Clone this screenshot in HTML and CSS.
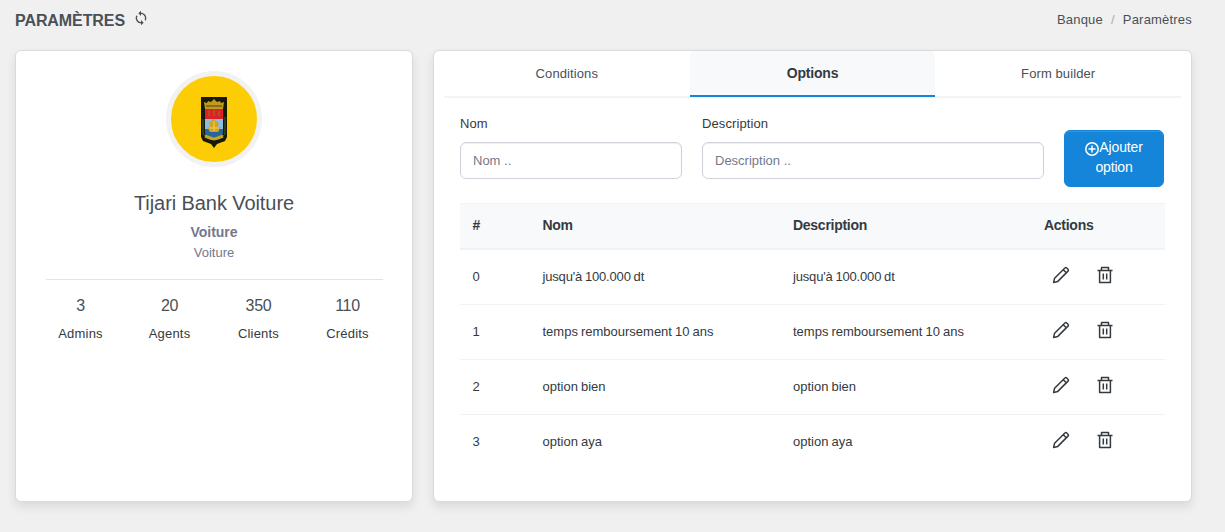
FILE: index.html
```html
<!DOCTYPE html>
<html lang="fr">
<head>
<meta charset="utf-8">
<title>Paramètres</title>
<link rel="stylesheet" href="styles.css">
</head>
<body>
<svg class="sprite" aria-hidden="true">
  <symbol id="pencil" viewBox="0 0 18 18"><path d="M1.6 16.4l1-4.2L12.9 2a1.3 1.3 0 0 1 1.9 0l1.2 1.2a1.3 1.3 0 0 1 0 1.9L5.8 15.4zM11.2 3.7l3.1 3.1" /></symbol>
  <symbol id="trash" viewBox="0 0 18 18"><path d="M1.5 4.5h15M5.5 4V1.5h7V4M3.6 5v11.6h10.8V5M7.3 7.5v6M10.7 7.5v6" /></symbol>
</svg>
<header class="topbar">
  <h1 class="title">PARAMÈTRES</h1>
  <svg class="sync" viewBox="0 0 24 24"><path d="M12 4V1L8 5l4 4V6c3.31 0 6 2.69 6 6 0 1.01-.25 1.97-.7 2.8l1.46 1.46C19.54 15.03 20 13.57 20 12c0-4.42-3.58-8-8-8zm0 14c-3.31 0-6-2.69-6-6 0-1.01.25-1.97.7-2.8L5.24 7.74C4.46 8.97 4 10.43 4 12c0 4.42 3.58 8 8 8v3l4-4-4-4v3z"/></svg>
  <nav class="breadcrumb"><span>Banque</span><span class="sep">/</span><span>Paramètres</span></nav>
</header>
<main class="content">
  <section class="card profile">
    <div class="avatar">
      <svg class="crest" viewBox="0 0 28 54">
        <path fill="#171908" d="M1 2h26v40l-2 4-8 3-3 4-3-4-8-3-2-4z"/>
        <path fill="#c39a20" d="M4 7l3 1 1-2 3 1 3-3 3 3 3-1 1 2 3-1-1 7H5z"/>
        <path stroke="#4d4010" d="M6 11h16" />
        <path fill="#dc2027" d="M5 14h18v10H5z"/>
        <path stroke="#a76218" stroke-width="1.5" d="M9 16v5M14 15v6M19 16v5"/>
        <path fill="#8dbde0" d="M5 24h18v10H5z"/>
        <path fill="#27669a" d="M5 34h18v5l-4 3H9l-4-3z"/>
        <path fill="#d1a323" d="M9 28l4-4 3 2 3 2-1 4h3l-3 5h-8l-3-5h3z"/>
        <path stroke="#efd25b" d="M9 33h10M14 26v10"/>
        <path stroke="#426026" fill="none" d="M3 24v15l4 4M25 22v17l-4 4"/>
        <path stroke="#c9a51e" stroke-width="3" fill="none" d="M5 41l5 2 4 1 4-1 5-2"/>
      </svg>
    </div>
    <h2 class="name"><span>Tijari Bank Voiture</span></h2>
    <strong class="kind">Voiture</strong>
    <span class="detail">Voiture</span>
    <div class="stats">
      <div><b>3</b><span>Admins</span></div>
      <div><b>20</b><span>Agents</span></div>
      <div><b>350</b><span>Clients</span></div>
      <div><b>110</b><span>Crédits</span></div>
    </div>
  </section>
  <section class="card settings">
    <div class="tabs"><a class="tab">Conditions</a><a class="tab active">Options</a><a class="tab">Form builder</a></div>
    <form class="form">
      <label class="field short">Nom<input class="input" placeholder="Nom .."></label>
      <label class="field long">Description<input class="input" placeholder="Description .."></label>
      <button class="add" type="button"><span class="line"><svg class="plus" viewBox="0 0 14 14"><path d="M7 3.5v7M3.5 7h7"/><circle cx="7" cy="7" r="6.2"/></svg>Ajouter</span><span class="line">option</span></button>
    </form>
    <div class="table">
      <div class="row head"><span>#</span><span>Nom</span><span>Description</span><span>Actions</span></div>
      <div class="row"><span>0</span><span class="amount">jusqu'à 100.000 dt</span><span class="amount">jusqu'à 100.000 dt</span><span class="actions"><svg><use href="#pencil"/></svg><svg><use href="#trash"/></svg></span></div>
      <div class="row"><span>1</span><span>temps remboursement 10 ans</span><span>temps remboursement 10 ans</span><span class="actions"><svg><use href="#pencil"/></svg><svg><use href="#trash"/></svg></span></div>
      <div class="row"><span>2</span><span>option bien</span><span>option bien</span><span class="actions"><svg><use href="#pencil"/></svg><svg><use href="#trash"/></svg></span></div>
      <div class="row"><span>3</span><span>option aya</span><span>option aya</span><span class="actions"><svg><use href="#pencil"/></svg><svg><use href="#trash"/></svg></span></div>
    </div>
  </section>
</main>
</body>
</html>
```
FILE: styles.css
```css
* { box-sizing: border-box; }
body {
  margin: 0;
  height: 532px;
  overflow: hidden;
  padding: 0 33px 0 15px;
  background: #f0f0f0;
  color: #343a40;
  font: 13px/20px "Liberation Sans", Arial, sans-serif;
}
.sprite { display: none; }
.topbar { height: 50px; display: flex; align-items: flex-start; padding-top: 10px; }
.title { margin: 0; font-size: 16px; line-height: 21px; font-weight: 700; color: #495057; letter-spacing: -.08px; }
.sync { width: 16px; height: 16px; margin: 0 0 0 8px; fill: #495057; }
.breadcrumb { margin-left: auto; display: flex; gap: 8px; color: #495057; letter-spacing: .2px; }
.sep { color: #a5abb1; }
.content { display: grid; grid-template-columns: 398px 759px; gap: 20px; height: 452px; }
.card {
  background: #fff;
  border: 1px solid #d8dadb;
  border-radius: 6px;
  box-shadow: 0 5px 10px rgba(30, 32, 37, .1);
}
.profile { display: flex; flex-direction: column; align-items: center; padding: 20px 30px; }
.avatar {
  width: 96px; height: 96px; border: 5px solid #f2f2f3; border-radius: 50%;
  background: #fccd04; display: flex; align-items: center; justify-content: center;
}
.crest { width: 28px; height: 54px; margin-top: 5px; filter: blur(.35px); }
.name { margin: 24px 0 0; font-weight: 400; font-size: 20px; line-height: 25px; color: #495057; letter-spacing: -.08px; }
.kind { margin-top: 6px; font-size: 14px; line-height: 20px; color: #74788d; }
.detail { line-height: 21px; color: #74788d; }
.stats { width: 337px; margin-top: 16px; padding-top: 15px; border-top: 1px solid #e1e3e4; display: flex; justify-content: space-between; }
.stats div { width: 70px; display: flex; flex-direction: column; align-items: center; }
.stats b { font-size: 16px; line-height: 22px; font-weight: 400; color: #495057; letter-spacing: -.3px; }
.stats span { margin-top: 7px; letter-spacing: .2px; }
.settings { padding: 0 10px; }
.tabs { display: flex; height: 47px; border-bottom: 2px solid #f3f4f5; }
.tab { flex: 1; height: 46px; text-align: center; line-height: 45px; color: #495057; border-radius: 5px 5px 0 0; letter-spacing: .1px; }
.tab.active { background: #f8f9fb; border-bottom: 2px solid #1485d9; font-size: 14px; font-weight: 700; color: #343a40; letter-spacing: -.2px; }
.form { display: flex; padding: 15px 16px 0; }
.field { display: flex; flex-direction: column; gap: 8px; padding-top: 1px; letter-spacing: .1px; }
.short { width: 222px; margin-right: 20px; }
.long { width: 342px; margin-right: 20px; }
.input {
  width: 100%; height: 37px; padding: 0 12px; border: 1px solid #ced4da; border-radius: 6px;
  background: #fff; font: inherit; box-shadow: inset 0 1px 1px rgba(0, 0, 0, .07);
}
.input::placeholder { color: #74788d; opacity: 1; }
.add {
  width: 100px; height: 57px; margin: 17px 0 0; padding: 0 0 4px; border: 1px solid #1485d9; border-radius: 6px;
  background: #1485d9; box-shadow: inset 0 1px 0 #3496df; color: #fff; font: 14px/20px "Liberation Sans", Arial, sans-serif; letter-spacing: -.15px;
}
.line { display: flex; align-items: center; justify-content: center; }
.plus { width: 14px; height: 14px; margin-top: 4px; fill: none; stroke: #fff; stroke-width: 1.5; }
.table { margin: 16px 16px 0; width: 705px; }
.row { display: grid; grid-template-columns: 70px 250.5px 251px 109px; padding-left: 12.5px; height: 55px; align-items: center; border-bottom: 1px solid #eff2f7; word-spacing: -.6px; }
.row:last-child { border-bottom-color: transparent; }
.head { height: 47px; padding-bottom: 3px; background: #f8f9fb; border-top: 1px solid #eff2f7; border-bottom: 2px solid #eff2f7; font-weight: 700; font-size: 14px; letter-spacing: -.27px; }
.amount { letter-spacing: -.17px; }
.actions { display: flex; gap: 26px; padding: 0 0 4px 8px; }
.actions svg { width: 18px; height: 18px; fill: none; stroke: #343a40; stroke-width: 1.5; stroke-linejoin: round; }
```
